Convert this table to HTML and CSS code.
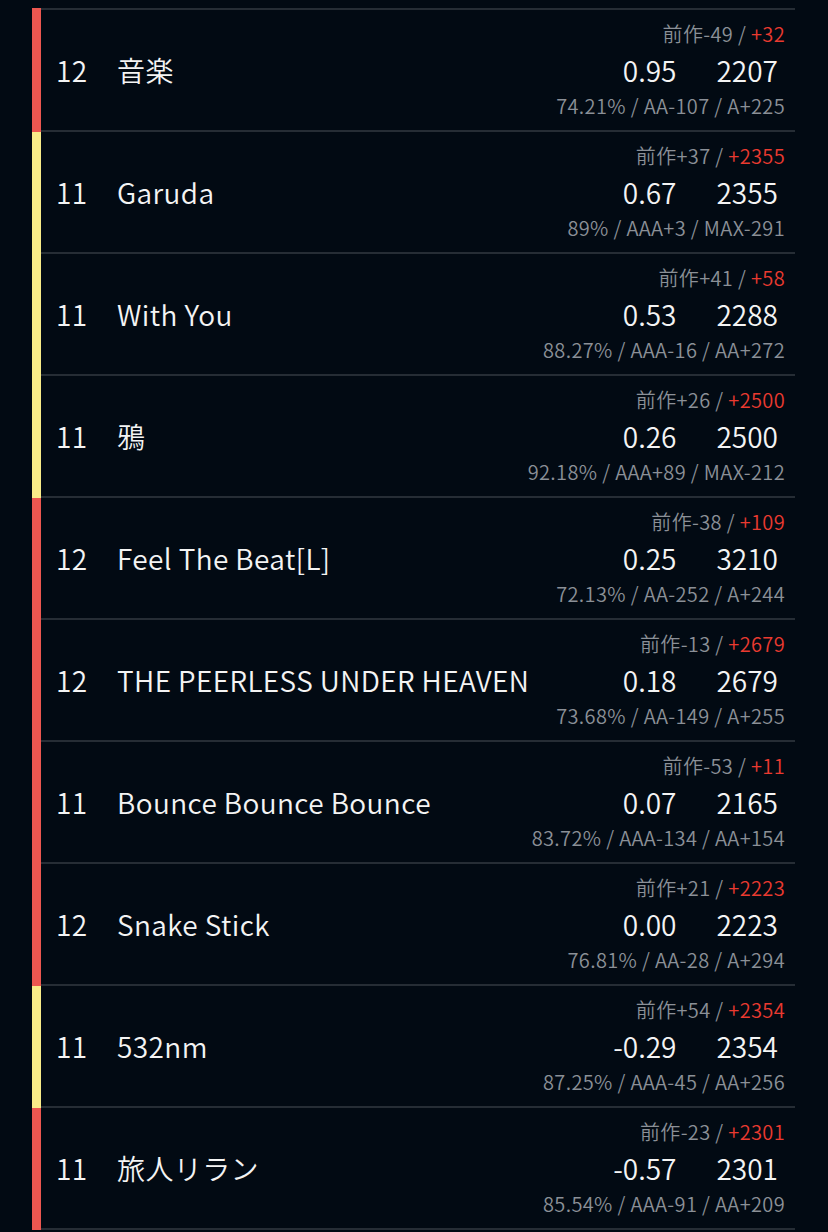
FILE: index.html
```html
<!DOCTYPE html>
<html lang="ja">
<head>
    <meta charset="UTF-8">
    <meta name="viewport" content="width=device-width, initial-scale=1.0">
    <title>Rating</title>
    <link rel="stylesheet" href="styles.css">
</head>
<body>
    <div class="list">
        <div class="row lv12">
            <div class="bar"></div>
            <div class="body">
                <div class="name"><span class="level">12</span><span class="title">音楽</span></div>
                <div class="stats">
                    <div class="diff">前作-49 / <span class="gain">+32</span></div>
                    <div class="main"><span class="rate">0.95</span><span class="score">2207</span></div>
                    <div class="detail">74.21% / AA-107 / A+225</div>
                </div>
            </div>
        </div>
        <div class="row lv11">
            <div class="bar"></div>
            <div class="body">
                <div class="name"><span class="level">11</span><span class="title">Garuda</span></div>
                <div class="stats">
                    <div class="diff">前作+37 / <span class="gain">+2355</span></div>
                    <div class="main"><span class="rate">0.67</span><span class="score">2355</span></div>
                    <div class="detail">89% / AAA+3 / MAX-291</div>
                </div>
            </div>
        </div>
        <div class="row lv11">
            <div class="bar"></div>
            <div class="body">
                <div class="name"><span class="level">11</span><span class="title">With You</span></div>
                <div class="stats">
                    <div class="diff">前作+41 / <span class="gain">+58</span></div>
                    <div class="main"><span class="rate">0.53</span><span class="score">2288</span></div>
                    <div class="detail">88.27% / AAA-16 / AA+272</div>
                </div>
            </div>
        </div>
        <div class="row lv11">
            <div class="bar"></div>
            <div class="body">
                <div class="name"><span class="level">11</span><span class="title">鴉</span></div>
                <div class="stats">
                    <div class="diff">前作+26 / <span class="gain">+2500</span></div>
                    <div class="main"><span class="rate">0.26</span><span class="score">2500</span></div>
                    <div class="detail">92.18% / AAA+89 / MAX-212</div>
                </div>
            </div>
        </div>
        <div class="row lv12">
            <div class="bar"></div>
            <div class="body">
                <div class="name"><span class="level">12</span><span class="title">Feel The Beat[L]</span></div>
                <div class="stats">
                    <div class="diff">前作-38 / <span class="gain">+109</span></div>
                    <div class="main"><span class="rate">0.25</span><span class="score">3210</span></div>
                    <div class="detail">72.13% / AA-252 / A+244</div>
                </div>
            </div>
        </div>
        <div class="row lv12">
            <div class="bar"></div>
            <div class="body">
                <div class="name"><span class="level">12</span><span class="title">THE PEERLESS UNDER HEAVEN</span></div>
                <div class="stats">
                    <div class="diff">前作-13 / <span class="gain">+2679</span></div>
                    <div class="main"><span class="rate">0.18</span><span class="score">2679</span></div>
                    <div class="detail">73.68% / AA-149 / A+255</div>
                </div>
            </div>
        </div>
        <div class="row lv12">
            <div class="bar"></div>
            <div class="body">
                <div class="name"><span class="level">11</span><span class="title">Bounce Bounce Bounce</span></div>
                <div class="stats">
                    <div class="diff">前作-53 / <span class="gain">+11</span></div>
                    <div class="main"><span class="rate">0.07</span><span class="score">2165</span></div>
                    <div class="detail">83.72% / AAA-134 / AA+154</div>
                </div>
            </div>
        </div>
        <div class="row lv12">
            <div class="bar"></div>
            <div class="body">
                <div class="name"><span class="level">12</span><span class="title">Snake Stick</span></div>
                <div class="stats">
                    <div class="diff">前作+21 / <span class="gain">+2223</span></div>
                    <div class="main"><span class="rate">0.00</span><span class="score">2223</span></div>
                    <div class="detail">76.81% / AA-28 / A+294</div>
                </div>
            </div>
        </div>
        <div class="row lv11">
            <div class="bar"></div>
            <div class="body">
                <div class="name"><span class="level">11</span><span class="title">532nm</span></div>
                <div class="stats">
                    <div class="diff">前作+54 / <span class="gain">+2354</span></div>
                    <div class="main"><span class="rate">-0.29</span><span class="score">2354</span></div>
                    <div class="detail">87.25% / AAA-45 / AA+256</div>
                </div>
            </div>
        </div>
        <div class="row lv12">
            <div class="bar"></div>
            <div class="body">
                <div class="name"><span class="level">11</span><span class="title">旅人リラン</span></div>
                <div class="stats">
                    <div class="diff">前作-23 / <span class="gain">+2301</span></div>
                    <div class="main"><span class="rate">-0.57</span><span class="score">2301</span></div>
                    <div class="detail">85.54% / AAA-91 / AA+209</div>
                </div>
            </div>
        </div>
    </div>
</body>
</html>
```

FILE: styles.css
```css
body {
    margin: 0;
    background: #020a13;
    font-family: "Noto Sans CJK JP", "Noto Sans", sans-serif;
    font-weight: 350;
    color: #f4f4f4;
}

.list {
    width: 763px;
    margin: 8px 0 0 32px;
}

.row {
    display: flex;
}

.bar {
    width: 9px;
    flex-shrink: 0;
}

.lv12 .bar {
    background: #ec5750;
}

.lv11 .bar {
    background: #f9ec88;
}

.body {
    flex: 1;
    display: flex;
    align-items: center;
    justify-content: space-between;
    height: 120px;
    padding: 0 10px 0 15px;
    border-bottom: 2px solid #262d35;
}

.row:first-child .body {
    border-top: 2px solid #262d35;
}

.name {
    font-size: 28px;
    line-height: 48px;
    letter-spacing: 0.4px;
    white-space: nowrap;
}

.level {
    display: inline-block;
    width: 61px;
}

.stats {
    text-align: right;
}

.diff,
.detail {
    font-size: 20px;
    line-height: 24px;
    letter-spacing: 0.35px;
    color: #8b9097;
}

.gain {
    color: #ea3a30;
}

.main {
    font-size: 28px;
    line-height: 48px;
    padding-right: 7px;
}

.score {
    margin-left: 40px;
}
```
